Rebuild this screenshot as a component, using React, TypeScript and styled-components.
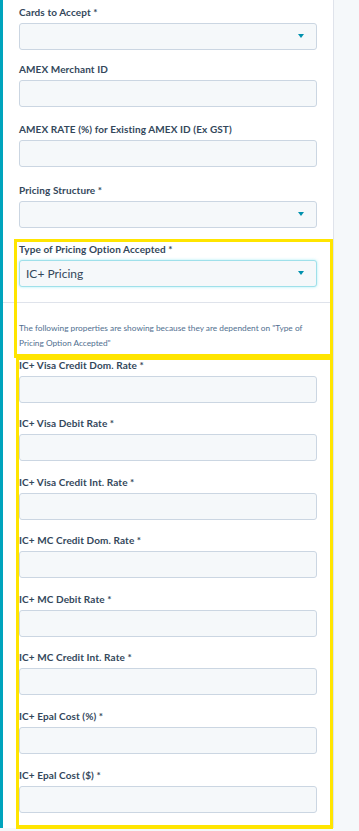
import React from 'react'
import styled, { createGlobalStyle } from 'styled-components'

const GlobalStyle = createGlobalStyle`
  html, body {
    margin: 0;
    padding: 0;
    background: #f5f8fa;
  }

  body {
    font-family: Lato, 'Liberation Sans', sans-serif;
  }
`

const Page = styled.div`
  width: 359px;
  height: 831px;
  overflow: hidden;
  background: #f5f8fa;
`

const Panel = styled.div`
  box-sizing: border-box;
  width: 334px;
  height: 828px;
  padding: 5px 16px 0;
  background: #fff;
  border-left: 3px solid #00a4bd;
  border-right: 1px solid #dfe3eb;
`

const Group = styled.div`
  position: relative;
`

// yellow annotation frame laid over a group of fields
const Highlight = styled.div<{ $top: number; $left: number; $bottom: number }>`
  position: absolute;
  top: ${({ $top }) => $top}px;
  left: ${({ $left }) => $left}px;
  right: -16px;
  bottom: ${({ $bottom }) => $bottom}px;
  border: 3px solid #ffe500;
  border-bottom-width: 4px;
  pointer-events: none;
`

const Field = styled.div<{ $gap?: number }>`
  padding-bottom: ${({ $gap }) => $gap ?? 13.6}px;
`

const Label = styled.label`
  display: block;
  margin-bottom: 4px;
  font-size: 10px;
  line-height: 14px;
  font-weight: 700;
  letter-spacing: 0.1px;
  color: #33475b;
`

const TextInput = styled.input`
  display: block;
  box-sizing: border-box;
  width: 100%;
  height: 27px;
  margin: 0;
  padding: 0 6px;
  background: #f5f8fa;
  border: 1px solid #cbd6e2;
  border-radius: 3px;
  font-family: inherit;
  font-size: 12px;
  color: #33475b;
  outline: none;
`

const Select = styled.div<{ $focused?: boolean }>`
  box-sizing: border-box;
  height: 27px;
  display: flex;
  align-items: center;
  justify-content: space-between;
  padding: 0 12px 0 6px;
  background: #f5f8fa;
  border: 1px solid ${({ $focused }) => ($focused ? '#9fe0ea' : '#cbd6e2')};
  border-radius: 3px;
  box-shadow: ${({ $focused }) =>
    $focused ? '0 0 3px 0 rgba(0, 208, 228, 0.35)' : 'none'};
  font-size: 12px;
  color: #33475b;
`

const Caret = styled.span`
  width: 0;
  height: 0;
  margin-top: -1px;
  border-left: 3.5px solid transparent;
  border-right: 3.5px solid transparent;
  border-top: 4px solid #0091ae;
`

const Divider = styled.hr`
  height: 1px;
  margin: 15px -16px 0;
  border: none;
  background: #dfe3eb;
`

const Note = styled.p`
  margin: 18px 0 6.5px;
  font-size: 8.3px;
  line-height: 15px;
  color: #516f90;
`

const TOP_FIELDS = [
  { label: 'Cards to Accept *', select: true, gap: 12 },
  { label: 'AMEX Merchant ID', gap: 15 },
  { label: 'AMEX RATE (%) for Existing AMEX ID (Ex GST)', gap: 16 },
  { label: 'Pricing Structure *', select: true, gap: 14 },
]

const RATE_FIELDS = [
  'IC+ Visa Credit Dom. Rate *',
  'IC+ Visa Debit Rate *',
  'IC+ Visa Credit Int. Rate *',
  'IC+ MC Credit Dom. Rate *',
  'IC+ MC Debit Rate *',
  'IC+ MC Credit Int. Rate *',
  'IC+ Epal Cost (%) *',
  'IC+ Epal Cost ($) *',
]

const App = () => {
  return (
    <Page>
      <GlobalStyle />
      <Panel>
        {TOP_FIELDS.map((f) => (
          <Field key={f.label} $gap={f.gap}>
            <Label>{f.label}</Label>
            {f.select ? (
              <Select>
                <span />
                <Caret />
              </Select>
            ) : (
              <TextInput readOnly />
            )}
          </Field>
        ))}

        <Group>
          <Field $gap={0}>
            <Label>Type of Pricing Option Accepted *</Label>
            <Select $focused>
              <span>IC+ Pricing</span>
              <Caret />
            </Select>
          </Field>
          <Divider />
          <Note>
            The following properties are showing because they are dependent on
            "Type of Pricing Option Accepted"
          </Note>
          <Highlight $top={-3} $left={-5} $bottom={-6.5} />
        </Group>

        <Group>
          {RATE_FIELDS.map((label) => (
            <Field key={label}>
              <Label>{label}</Label>
              <TextInput readOnly />
            </Field>
          ))}
          <Highlight $top={-1} $left={-3} $bottom={-2.4} />
        </Group>
      </Panel>
    </Page>
  )
}

export default App
